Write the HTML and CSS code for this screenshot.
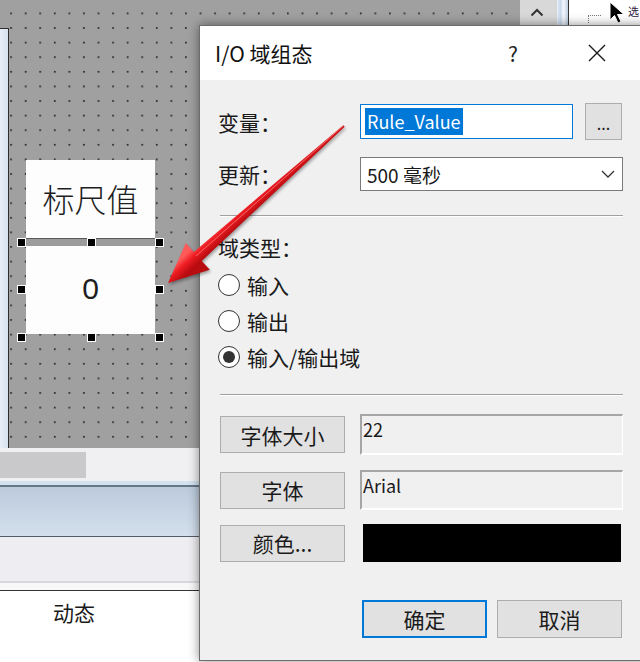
FILE: index.html
```html
<!DOCTYPE html>
<html lang="zh-CN">
<head>
<meta charset="utf-8">
<title>I/O 域组态</title>
<link rel="stylesheet" href="styles.css">
</head>
<body>
<div class="app">
  <div class="workspace">
    <div class="top">
      <div class="leftstrip"></div>
      <div class="canvas">
        <svg class="grid" width="511" height="448">
          <defs>
            <pattern id="dots" x="1.2" y="12.5" width="14.57" height="14.6" patternUnits="userSpaceOnUse">
              <rect width="1.7" height="1.7" fill="#262626"/>
            </pattern>
          </defs>
          <rect width="511" height="448" fill="url(#dots)"/>
        </svg>
        <div class="widget w-label">标尺值</div>
        <div class="w-gap"></div>
        <div class="widget w-value">0</div>
        <span class="handle" style="left:8px;top:238px"></span>
        <span class="handle" style="left:78px;top:238px"></span>
        <span class="handle" style="left:146px;top:238px"></span>
        <span class="handle" style="left:8px;top:285px"></span>
        <span class="handle" style="left:146px;top:285px"></span>
        <span class="handle" style="left:8px;top:333px"></span>
        <span class="handle" style="left:78px;top:333px"></span>
        <span class="handle" style="left:146px;top:333px"></span>
      </div>
      <div class="vscroll">
        <svg class="chev-up" width="14" height="9" viewBox="0 0 14 9"><path d="M1.5 7.5 L7 2 L12.5 7.5" fill="none" stroke="#333" stroke-width="2"/></svg>
      </div>
      <div class="bluebar"></div>
      <div class="rpanel">
        <span class="dots"></span>
        <svg class="cursor" width="18" height="24" viewBox="0 0 18 24"><path d="M1 1 L1 19 L5.5 14.5 L9 22 L12 20.5 L8.5 13.5 L15 13.5 Z" fill="#000" stroke="#fff" stroke-width="1"/></svg>
        <span class="cut">选</span>
      </div>
    </div>
    <div class="hscroll"><div class="thumb"></div></div>
    <div class="ribbon"></div>
    <div class="tabs"></div>
    <div class="props"><span class="props-label">动态</span></div>
  </div>

  <div class="dialog">
    <div class="titlebar">
      <span class="title">I/O 域组态</span>
      <span class="help">?</span>
      <span class="close">
        <svg width="18" height="18" viewBox="0 0 18 18"><path d="M1 1 L17 17 M17 1 L1 17" stroke="#1a1a1a" stroke-width="1.4"/></svg>
      </span>
    </div>
    <div class="body">
      <div class="row row-var">
        <span class="label">变量：</span>
        <div class="input focus"><span class="sel">Rule_Value</span></div>
        <div class="btn btn-dots">...</div>
      </div>
      <div class="row row-upd">
        <span class="label">更新：</span>
        <div class="select">
          <span class="sel-text">500 毫秒</span>
          <svg width="14" height="8" viewBox="0 0 14 8"><path d="M1 1 L7 7 L13 1" fill="none" stroke="#333" stroke-width="1.3"/></svg>
        </div>
      </div>
      <div class="sep sep1"></div>
      <div class="group-title">域类型：</div>
      <div class="radios">
        <div class="radio"><span class="dot"></span><span>输入</span></div>
        <div class="radio"><span class="dot"></span><span>输出</span></div>
        <div class="radio checked"><span class="dot"></span><span>输入/输出域</span></div>
      </div>
      <div class="sep sep2"></div>
      <div class="frow frow1">
        <div class="btn fbtn">字体大小</div>
        <div class="field">22</div>
      </div>
      <div class="frow frow2">
        <div class="btn fbtn">字体</div>
        <div class="field">Arial</div>
      </div>
      <div class="frow frow3">
        <div class="btn fbtn">颜色...</div>
        <div class="swatch"></div>
      </div>
      <div class="actions">
        <div class="btn abtn default">确定</div>
        <div class="btn abtn">取消</div>
      </div>
    </div>
  </div>

  <svg class="arrow" width="640" height="662" viewBox="0 0 640 662">
    <defs>
      <linearGradient id="ag" gradientUnits="userSpaceOnUse" x1="262" y1="185" x2="272" y2="196">
        <stop offset="0" stop-color="#ff5a5a"/>
        <stop offset="0.45" stop-color="#ee1c22"/>
        <stop offset="1" stop-color="#b80c10"/>
      </linearGradient>
    </defs>
    <polygon points="344.7,126.7 201.8,260.9 209.8,269.8 168,283 185.8,243 193.8,251.9 343.3,125.3" fill="url(#ag)"/>
    <polyline points="343,126 196,256" fill="none" stroke="#ff8a8a" stroke-width="1" opacity="0.7"/>
  </svg>
</div>
</body>
</html>
```

FILE: styles.css
```css
* { box-sizing: border-box; }
html, body { margin: 0; padding: 0; }
body {
  width: 640px;
  height: 662px;
  overflow: hidden;
  font-family: "Noto Sans CJK SC", "Noto Sans", sans-serif;
  color: #1a1a1a;
}
.app {
  position: relative;
  width: 640px;
  height: 662px;
  overflow: hidden;
  background: #fff;
}
.workspace {
  display: flex;
  flex-direction: column;
  height: 662px;
}
.top {
  display: flex;
  height: 448px;
  background: #a0a0a0;
}
.leftstrip {
  width: 9px;
  margin-top: 28px;
  background: linear-gradient(90deg, #e8eef7, #d6e2f0);
  border-right: 1px solid #2d2d2d;
  border-top: 1px solid #2d2d2d;
}
.canvas {
  position: relative;
  width: 511px;
  background-color: #a0a0a0;
}
.grid {
  position: absolute;
  left: 0;
  top: 0;
  display: block;
}
.widget {
  position: absolute;
  left: 17px;
  width: 129px;
  background: #fdfdfd;
  display: flex;
  align-items: center;
  justify-content: center;
  color: #1e1e1e;
}
.w-label {
  top: 160px;
  height: 78px;
  font-size: 32px;
  font-weight: 300;
  padding-bottom: 2px;
}
.w-gap {
  position: absolute;
  left: 17px;
  top: 238px;
  width: 129px;
  height: 8px;
  background: #9c9c9c;
  border-top: 1px solid #5a5a5a;
}
.w-value {
  top: 246px;
  height: 88px;
  font-family: "Liberation Sans", Arial, sans-serif;
  font-size: 30px;
  padding-bottom: 2px;
}
.handle {
  position: absolute;
  width: 9px;
  height: 9px;
  background: #000;
  border: 1px solid #fff;
}
.vscroll {
  width: 37px;
  background: #d8d8d8;
  display: flex;
  justify-content: center;
  padding: 8px 4px 0 0;
}
.chev-up { display: block; }
.bluebar {
  width: 12px;
  background: linear-gradient(90deg, #e9eff7 0, #c6d8ee 30%, #f4f7fb 60%, #c0cfe2 100%);
  border-right: 1px solid #333;
}
.rpanel {
  position: relative;
  flex: 1;
  background: #fff;
  overflow: hidden;
}
.dots {
  position: absolute;
  left: 19px;
  top: 15px;
  width: 13px;
  height: 8px;
  border-top: 1px dotted #777;
  border-left: 1px dotted #777;
}
.cursor {
  position: absolute;
  left: 40px;
  top: 1px;
}
.cut {
  position: absolute;
  left: 59px;
  top: 4px;
  font-size: 11px;
  line-height: 14px;
  color: #2a2040;
}
.hscroll {
  height: 33px;
  background: #f0f0f2;
  padding-top: 4px;
}
.thumb {
  width: 86px;
  height: 26px;
  background: #c9c9cb;
}
.ribbon {
  height: 56px;
  background:
    linear-gradient(#d2e2ef 0, #d2e2ef 4px, #66778a 4px, #66778a 6px, transparent 6px),
    linear-gradient(#b9c8da 0, #d3dfec 100%);
  border-bottom: 1px solid #555c66;
}
.tabs {
  height: 54px;
  background: linear-gradient(#eeeef2 0, #eeeef2 44px, #d8d8dc 44px, #d8d8dc 46px, #f8f8f8 46px, #f8f8f8 53px, #333 53px);
}
.props {
  flex: 1;
  background: #fff;
  padding: 8px 0 0 53px;
}
.props-label {
  font-size: 21px;
  line-height: 26px;
  color: #1a1a1a;
}

/* dialog */
.dialog {
  position: absolute;
  left: 199px;
  top: 25px;
  width: 450px;
  height: 636px;
  border: 1px solid #6d6d6d;
  background: #f0f0f0;
  box-shadow: 0 0 10px rgba(0,0,0,0.45);
}
.titlebar {
  height: 54px;
  background: #fff;
  display: flex;
  align-items: center;
  padding: 0 34px 0 15px;
}
.title {
  flex: 1;
  font-size: 21px;
  color: #111;
}
.help {
  width: 26px;
  text-align: center;
  font-size: 21px;
  color: #222;
}
.close {
  margin-left: 54px;
  width: 34px;
  display: flex;
  justify-content: center;
}
.close svg { display: block; }
.body {
  padding: 23px 0 0 18px;
  font-size: 21px;
}
.row {
  display: flex;
  align-items: center;
}
.label {
  width: 142px;
}
.row-var { height: 37px; }
.input {
  width: 213px;
  height: 35px;
  background: #fff;
  border: 1px solid #0078d7;
  display: flex;
  align-items: center;
  padding-left: 4px;
}
.sel {
  background: #0078d7;
  color: #fff;
  font-size: 18px;
  line-height: 27px;
  padding: 0 2px;
}
.btn {
  background: #e1e1e1;
  border: 1px solid #adadad;
  display: flex;
  align-items: center;
  justify-content: center;
  color: #1a1a1a;
}
.btn-dots {
  margin-left: 12px;
  width: 37px;
  height: 37px;
  font-size: 16px;
  padding-top: 2px;
}
.row-upd {
  margin-top: 17px;
  height: 34px;
}
.select {
  width: 263px;
  height: 34px;
  background: #fff;
  border: 1px solid #7a7a7a;
  display: flex;
  align-items: center;
  justify-content: space-between;
  padding: 0 7px 0 6px;
}
.sel-text { font-size: 19px; }
.select svg { display: block; }
.sep {
  width: 403px;
  margin-left: 2px;
  border-top: 1px solid #a0a0a0;
  border-bottom: 1px solid #fff;
}
.sep1 { margin-top: 24px; }
.group-title {
  margin-top: 17px;
  line-height: 26px;
  height: 26px;
}
.radios { margin-top: 7px; }
.radio {
  height: 36px;
  display: flex;
  align-items: center;
  gap: 7px;
}
.radio .dot {
  width: 22px;
  height: 22px;
  border-radius: 50%;
  border: 1.5px solid #333;
  background: #fff;
  display: flex;
  align-items: center;
  justify-content: center;
}
.radio.checked .dot::after {
  content: "";
  width: 12px;
  height: 12px;
  border-radius: 50%;
  background: #333;
}
.sep2 { margin-top: 19px; }
.frow {
  display: flex;
  align-items: center;
  margin-left: 2px;
}
.frow1 { margin-top: 18px; height: 41px; }
.frow2 { margin-top: 15px; height: 40px; }
.frow3 { margin-top: 14px; height: 38px; }
.fbtn {
  width: 125px;
  height: 37px;
  font-size: 21px;
}
.field {
  margin-left: 15px;
  width: 263px;
  height: 100%;
  background: #f0f0f0;
  border-top: 2px solid #a6a6a6;
  border-left: 2px solid #a6a6a6;
  border-right: 1px solid #fff;
  border-bottom: 2px solid #fff;
  font-size: 18px;
  line-height: 22px;
  padding: 2px 0 0 1px;
}
.swatch {
  margin-left: 18px;
  width: 258px;
  height: 38px;
  background: #000;
}
.actions {
  display: flex;
  gap: 10px;
  margin-top: 38px;
  padding-left: 144px;
}
.abtn {
  width: 125px;
  height: 38px;
  font-size: 21px;
}
.abtn.default {
  border: 2px solid #0078d7;
}

.arrow {
  position: absolute;
  left: 0;
  top: 0;
  pointer-events: none;
  filter: drop-shadow(1px 2px 1.5px rgba(0,0,0,0.35));
}
```
